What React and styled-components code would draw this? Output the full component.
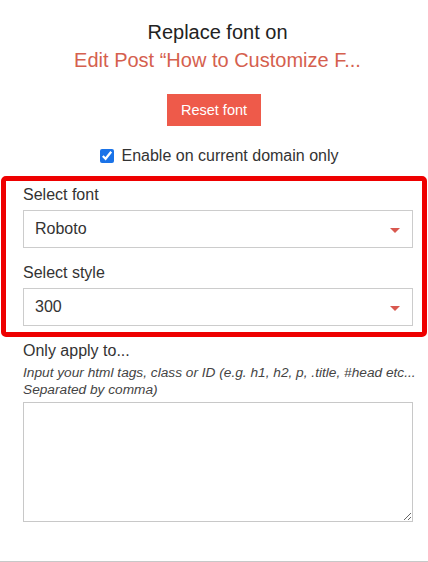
import React, { useState } from "react";
import styled, { createGlobalStyle } from "styled-components";

const GlobalStyle = createGlobalStyle`
  html, body {
    margin: 0;
    padding: 0;
    background: #fff;
  }
  body {
    font-family: "Liberation Sans", Arial, sans-serif;
    color: #333;
  }
`;

function App() {
  const [domainOnly, setDomainOnly] = useState(true);

  return (
    <Page>
      <GlobalStyle />
      <Header>
        <Title>Replace font on</Title>
        <SiteTitle>Edit Post “How to Customize F...</SiteTitle>
      </Header>
      <ResetButton>Reset font</ResetButton>
      <CheckRow>
        <Checkbox
          type="checkbox"
          checked={domainOnly}
          onChange={(e) => setDomainOnly(e.target.checked)}
        />
        Enable on current domain only
      </CheckRow>
      <Highlight>
        <Label>Select font</Label>
        <Select>
          <span>Roboto</span>
          <Caret />
        </Select>
        <Label>Select style</Label>
        <Select last>
          <span>300</span>
          <Caret />
        </Select>
      </Highlight>
      <Section>
        <Label>Only apply to...</Label>
        <Hint>
          Input your html tags, class or ID (e.g. h1, h2, p, .title, #head etc...
          <br />
          Separated by comma)
        </Hint>
        <TextArea />
      </Section>
      <Divider />
    </Page>
  );
}

export default App;

const Page = styled.div`
  width: 428px;
  height: 562px;
  box-sizing: border-box;
  padding-top: 18px;
  display: flex;
  flex-direction: column;
  align-items: center;
`;

const Header = styled.div`
  text-align: center;
  font-size: 20px;
  line-height: 28px;
  padding-left: 7px;
`;

const Title = styled.div`
  color: #222;
`;

const SiteTitle = styled.div`
  color: #d5604e;
`;

const ResetButton = styled.button`
  margin-top: 20px;
  width: 94px;
  height: 32px;
  border: none;
  border-radius: 0;
  background: #ee5a4a;
  color: #fff;
  font-family: inherit;
  font-size: 14.5px;
  line-height: 32px;
  padding: 0;
  cursor: pointer;
`;

const CheckRow = styled.label`
  margin: 20px 0 0 11px;
  display: flex;
  align-items: center;
  font-size: 16px;
  line-height: 20px;
  color: #333;
`;

const Checkbox = styled.input`
  width: 14px;
  height: 14px;
  margin: 0 7px 0 0;
  accent-color: #1a73e8;
`;

const Highlight = styled.div`
  align-self: stretch;
  margin: 10px 1px 0;
  padding: 4px 9px 6px 17px;
  border: 5px solid #ee0000;
  border-radius: 5px;
  display: flex;
  flex-direction: column;
`;

const Label = styled.div`
  font-size: 16px;
  line-height: 20px;
  color: #333;
  margin-bottom: 5px;
`;

const Select = styled.div`
  height: 38px;
  box-sizing: border-box;
  border: 1px solid #ccc;
  padding: 0 12px 0 11px;
  display: flex;
  align-items: center;
  justify-content: space-between;
  font-size: 16px;
  color: #333;
  margin-bottom: ${(p) => (p.last ? "0" : "15px")};
`;

const Caret = styled.span`
  width: 0;
  height: 0;
  border-left: 5px solid transparent;
  border-right: 5px solid transparent;
  border-top: 5px solid #d9584f;
  margin-top: 2px;
`;

const Section = styled.div`
  align-self: stretch;
  padding: 4px 15px 0 23px;
  display: flex;
  flex-direction: column;
`;

const Hint = styled.div`
  font-size: 13.7px;
  font-style: italic;
  line-height: 17px;
  color: #444;
  margin-top: -2px;
  white-space: nowrap;
`;

const TextArea = styled.textarea`
  margin-top: 4px;
  height: 120px;
  width: 100%;
  box-sizing: border-box;
  border: 1px solid #c8c8c8;
  font-family: inherit;
  font-size: 14px;
`;

const Divider = styled.div`
  align-self: stretch;
  margin-top: auto;
  border-top: 1px solid #c8c8c8;
`;
